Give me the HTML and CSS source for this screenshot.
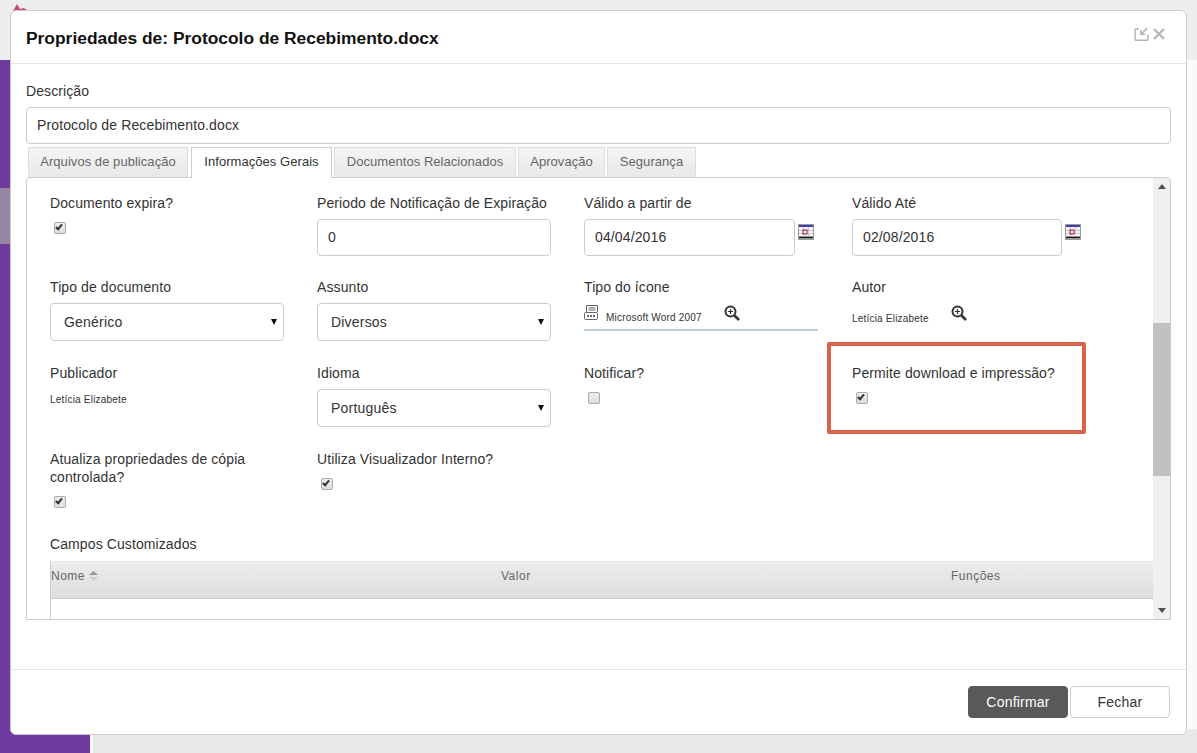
FILE: index.html
```html
<!DOCTYPE html>
<html lang="pt">
<head>
    <meta charset="UTF-8">
    <title>Propriedades de: Protocolo de Recebimento.docx</title>
    <link rel="stylesheet" href="styles.css">
</head>
<body>
    <div class="backdrop">
        <div class="topbar"></div>
        <div class="sidebar">
            <div class="sidebar-item"></div>
        </div>
        <div class="page-content"></div>
        <svg class="logo-tip" width="16" height="8" viewBox="0 0 16 8"><path d="M1 8 L5 1 L8 6 L12 5 L16 8 Z" fill="#c8487a"/></svg>
    </div>

    <div class="modal">
        <div class="modal-header">
            <h2>Propriedades de: Protocolo de Recebimento.docx</h2>
            <div class="modal-actions">
                <svg width="15" height="14" viewBox="0 0 15.3 14.6" fill="none" stroke="#b5b5b5" stroke-width="1.6">
                    <path d="M5 2 H1.5 Q1 2 1 2.5 V13 Q1 13.8 1.8 13.8 H13.5 Q14.3 13.8 14.3 13 V8"/>
                    <path d="M13.5 1.2 L7 7.5 M7 3.2 V7.5 H11.5"/>
                </svg>
                <svg width="12" height="12" viewBox="0 0 12 12" fill="none" stroke="#b5b5b5" stroke-width="2.2">
                    <path d="M1 1 L11 11 M11 1 L1 11"/>
                </svg>
            </div>
        </div>

        <div class="modal-body">
            <label class="desc-label">Descrição</label>
            <input class="text-input desc-input" type="text" value="Protocolo de Recebimento.docx">

            <div class="tabs">
                <div class="tab tab-first">Arquivos de publicação</div>
                <div class="tab tab-active">Informações Gerais</div>
                <div class="tab tab-docs">Documentos Relacionados</div>
                <div class="tab tab-aprov">Aprovação</div>
                <div class="tab tab-seg">Segurança</div>
            </div>

            <div class="panel">
                <div class="panel-content">
                    <div class="form-grid">
                        <div class="field row-a">
                            <label>Documento expira?</label>
                            <span class="check checked"></span>
                        </div>
                        <div class="field row-a">
                            <label>Periodo de Notificação de Expiração</label>
                            <input class="text-input" type="text" value="0">
                        </div>
                        <div class="field row-a">
                            <label>Válido a partir de</label>
                            <div class="date-wrap">
                                <input class="text-input date-input" type="text" value="04/04/2016">
                                <svg class="cal-icon" width="16" height="16" viewBox="0 0 16 16">
                                    <rect width="16" height="16" fill="#9a9a9a"/>
                                    <rect x="1" y="1" width="14" height="2" fill="#4040b0"/>
                                    <rect x="1" y="3" width="14" height="9" fill="#f4f4f4"/>
                                    <path d="M1 6.5 H15 M1 9.5 H15 M5.5 3 V12 M10.5 3 V12" stroke="#c8c8d8" stroke-width="1"/>
                                    <rect x="5" y="6" width="4" height="4" fill="none" stroke="#a01850" stroke-width="1"/>
                                    <rect x="1" y="13" width="14" height="1" fill="#111"/>
                                </svg>
                            </div>
                        </div>
                        <div class="field row-a">
                            <label>Válido Até</label>
                            <div class="date-wrap">
                                <input class="text-input date-input date-input-end" type="text" value="02/08/2016">
                                <svg class="cal-icon" width="16" height="16" viewBox="0 0 16 16">
                                    <rect width="16" height="16" fill="#9a9a9a"/>
                                    <rect x="1" y="1" width="14" height="2" fill="#4040b0"/>
                                    <rect x="1" y="3" width="14" height="9" fill="#f4f4f4"/>
                                    <path d="M1 6.5 H15 M1 9.5 H15 M5.5 3 V12 M10.5 3 V12" stroke="#c8c8d8" stroke-width="1"/>
                                    <rect x="5" y="6" width="4" height="4" fill="none" stroke="#a01850" stroke-width="1"/>
                                    <rect x="1" y="13" width="14" height="1" fill="#111"/>
                                </svg>
                            </div>
                        </div>

                        <div class="field row-b">
                            <label>Tipo de documento</label>
                            <div class="select">Genérico</div>
                        </div>
                        <div class="field row-b">
                            <label>Assunto</label>
                            <div class="select">Diversos</div>
                        </div>
                        <div class="field row-b">
                            <label>Tipo do ícone</label>
                            <div class="lookup lookup-line">
                                <svg class="doc-icon" width="16" height="17" viewBox="0 0 16 17" fill="none" stroke="#666" stroke-width="1">
                                    <path d="M2.5 8 V1.5 H13.5 V8 M4.5 4 H11.5 M4.5 6 H11.5"/>
                                    <rect x="0.5" y="8.5" width="13" height="7" rx="1"/>
                                    <path d="M3 12 H11" stroke-width="2" stroke-dasharray="2 1"/>
                                </svg>
                                <span class="small-text">Microsoft Word 2007</span>
                                <svg class="zoom-icon" width="16" height="16" viewBox="0 0 16 16" fill="none" stroke="#333">
                                    <circle cx="6.5" cy="6.5" r="5" stroke-width="2"/>
                                    <path d="M10.5 10.5 L15 15" stroke-width="2.6"/>
                                    <path d="M4 6.5 H9 M6.5 4 V9" stroke-width="1.2"/>
                                </svg>
                            </div>
                        </div>
                        <div class="field row-b">
                            <label>Autor</label>
                            <div class="lookup">
                                <span class="small-text">Letícia Elizabete</span>
                                <svg class="zoom-icon" width="16" height="16" viewBox="0 0 16 16" fill="none" stroke="#333">
                                    <circle cx="6.5" cy="6.5" r="5" stroke-width="2"/>
                                    <path d="M10.5 10.5 L15 15" stroke-width="2.6"/>
                                    <path d="M4 6.5 H9 M6.5 4 V9" stroke-width="1.2"/>
                                </svg>
                            </div>
                        </div>

                        <div class="field row-c">
                            <label>Publicador</label>
                            <span class="small-text publisher">Letícia Elizabete</span>
                        </div>
                        <div class="field row-c">
                            <label>Idioma</label>
                            <div class="select">Português</div>
                        </div>
                        <div class="field row-c">
                            <label>Notificar?</label>
                            <span class="check"></span>
                        </div>
                        <div class="field row-c highlighted">
                            <label>Permite download e impressão?</label>
                            <span class="check checked"></span>
                        </div>

                        <div class="field row-d">
                            <label>Atualiza propriedades de cópia controlada?</label>
                            <span class="check checked"></span>
                        </div>
                        <div class="field row-d">
                            <label>Utiliza Visualizador Interno?</label>
                            <span class="check checked"></span>
                        </div>
                    </div>

                    <div class="custom-fields">
                        <div class="custom-title">Campos Customizados</div>
                        <div class="custom-table">
                            <div class="custom-head">
                                <span>Nome <svg class="sort-icon" width="9" height="10" viewBox="0 0 9 10"><path d="M4.5 0 L9 4 H0 Z" fill="#999"/><path d="M0 6 H9 L4.5 10 Z" fill="#ccc"/></svg></span>
                                <span>Valor</span>
                                <span>Funções</span>
                            </div>
                        </div>
                    </div>
                </div>
                <div class="scrollbar">
                    <span class="arrow arrow-up"></span>
                    <div class="scroll-track"><div class="scroll-thumb"></div></div>
                    <span class="arrow arrow-down"></span>
                </div>
            </div>
        </div>

        <div class="modal-footer">
            <button class="btn btn-primary">Confirmar</button>
            <button class="btn">Fechar</button>
        </div>
    </div>
</body>
</html>
```

FILE: styles.css
```css
html, body {
    margin: 0;
    height: 100%;
    overflow: hidden;
}
body {
    font-family: "Liberation Sans", Arial, sans-serif;
    font-size: 14px;
    color: #333;
    background-color: #fafafa;
}
.backdrop {
    position: absolute;
    inset: 0;
}
.topbar {
    height: 60px;
    background-color: #eee;
}
.sidebar {
    position: absolute;
    left: 0;
    top: 60px;
    bottom: 0;
    width: 90px;
    background-color: #6f3b9e;
}
.sidebar-item {
    margin-top: 128px;
    height: 56px;
    background-color: #9586a3;
}
.page-content {
    position: absolute;
    left: 93px;
    top: 729px;
    right: 0;
    bottom: 0;
    background-color: #e8e8e8;
}
.logo-tip {
    position: absolute;
    left: 12px;
    top: 3px;
}
.modal {
    position: absolute;
    left: 10px;
    top: 10px;
    width: 1175px;
    height: 723px;
    display: flex;
    flex-direction: column;
    background: #fff;
    border: 1px solid #ccc;
    border-radius: 6px;
}
.modal-header {
    height: 50px;
    flex: none;
    display: flex;
    align-items: center;
    justify-content: space-between;
    padding: 2px 21px 0 15px;
    border-bottom: 1px solid #e5e5e5;
}
.modal-header h2 {
    margin: 0;
    font-size: 17.4px;
    font-weight: bold;
    color: #111;
}
.modal-actions {
    display: flex;
    align-items: center;
    gap: 4px;
    margin-top: -8px;
}
.modal-body {
    flex: 1;
    padding: 18px 15px 0;
}
.desc-label {
    display: block;
    height: 25px;
    letter-spacing: 0.1px;
    line-height: 19px;
}
.text-input {
    display: block;
    width: 100%;
    height: 37px;
    box-sizing: border-box;
    padding: 0 10px 2px;
    font-family: inherit;
    font-size: 14px;
    letter-spacing: 0.13px;
    color: #333;
    border: 1px solid #ccc;
    border-radius: 4px;
    background: #fff;
}
.desc-input {
    height: 37px;
}
.tabs {
    display: flex;
    gap: 2px;
    margin: 3px 0 0 2px;
    height: 30px;
}
.tab {
    box-sizing: border-box;
    border: 1px solid #ddd;
    border-bottom: none;
    text-align: center;
    font-size: 13px;
    letter-spacing: 0.05px;
    line-height: 27px;
    color: #666;
    background: linear-gradient(#f5f5f5, #e8e8e8);
}
.tab-first { width: 160px; }
.tab-active {
    width: 141px;
    margin-left: 1px;
    height: 31px;
    color: #333;
    background: #fff;
    border-color: #ccc;
    position: relative;
    z-index: 1;
}
.tab-docs { width: 182px; }
.tab-aprov { width: 87px; }
.tab-seg { width: 89px; }
.panel {
    position: relative;
    height: 443px;
    box-sizing: border-box;
    border: 1px solid #ccc;
    border-radius: 4px 4px 0 0;
    overflow: hidden;
}
.panel-content {
    padding: 16px 17px 0 23px;
}
.form-grid {
    display: grid;
    grid-template-columns: 267px 267px 268px 267px;
}
.field label {
    display: block;
    letter-spacing: 0.1px;
    line-height: 18px;
    margin-bottom: 7px;
}
.row-a { height: 84px; }
.row-b { height: 86px; }
.row-c { height: 86px; }
.row-d { height: 85px; padding-right: 20px; }
.field > .text-input,
.select {
    width: 234px;
}
.date-wrap {
    display: flex;
    align-items: flex-start;
    gap: 3px;
}
.date-input {
    width: 211px;
}
.date-input-end {
    width: 210px;
}
.cal-icon {
    margin-top: 5px;
}
.select {
    height: 38px;
    box-sizing: border-box;
    padding-left: 13px;
    border: 1px solid #ccc;
    border-radius: 4px;
    line-height: 37px;
    letter-spacing: 0.2px;
    position: relative;
}
.select::after {
    content: "";
    position: absolute;
    right: 6px;
    top: 15px;
    border-left: 3px solid transparent;
    border-right: 3px solid transparent;
    border-top: 6px solid #111;
}
.check {
    display: block;
    width: 10px;
    height: 10px;
    margin: 10px 0 0 4px;
    border: 1px solid #aaa;
    border-radius: 2px;
    background: linear-gradient(#eee, #ddd);
    position: relative;
}
.check.checked::after {
    content: "";
    position: absolute;
    left: 2px;
    top: 0;
    width: 4px;
    height: 7px;
    border-right: 2px solid #333;
    border-bottom: 2px solid #333;
    box-sizing: border-box;
    transform: rotate(40deg);
}
.small-text {
    font-size: 10px;
    letter-spacing: 0.2px;
    color: #333;
}
.publisher {
    display: block;
    margin-top: 12px;
}
.lookup {
    display: flex;
    align-items: center;
    height: 24px;
    margin-top: 10px;
    width: 234px;
    position: relative;
}
.lookup .zoom-icon {
    margin-left: 22px;
    margin-top: -10px;
}
.lookup-line {
    height: 23px;
    border-bottom: 2px solid #bccfdc;
}
.doc-icon {
    margin-right: 6px;
    margin-top: -10px;
}
.highlighted {
    position: relative;
}
.highlighted::before {
    content: "";
    position: absolute;
    left: -25px;
    top: -22px;
    width: 259px;
    height: 92px;
    box-sizing: border-box;
    border: 4px solid #d9634a;
    border-radius: 2px;
}
.custom-title {
    letter-spacing: 0.1px;
    line-height: 18px;
    margin: 0 0 8px;
}
.custom-table {
    margin-right: 0;
    border-left: 1px solid #ccc;
    height: 60px;
}
.custom-head {
    height: 37px;
    box-sizing: content-box;
    display: grid;
    grid-template-columns: 450px 450px 1fr;
    align-items: start;
    border-bottom: 1px solid #ccc;
    font-size: 12px;
    letter-spacing: 0.5px;
    line-height: 30px;
    color: #666;
    background: linear-gradient(#ececec, #dedede);
}
.sort-icon {
    vertical-align: -1px;
}
.scrollbar {
    position: absolute;
    right: 0;
    top: 0;
    bottom: 0;
    width: 17px;
    display: flex;
    flex-direction: column;
    background: #f0f0f0;
}
.scroll-track {
    flex: 1;
    padding-top: 128px;
}
.scroll-thumb {
    height: 153px;
    background: #c1c1c1;
}
.arrow {
    display: block;
    align-self: center;
    width: 0;
    height: 0;
    border-left: 4px solid transparent;
    border-right: 4px solid transparent;
    margin: 6px 0;
}
.arrow-up { border-bottom: 5px solid #505050; }
.arrow-down { border-top: 5px solid #505050; }
.modal-footer {
    height: 64px;
    flex: none;
    display: flex;
    align-items: center;
    justify-content: flex-end;
    gap: 2px;
    padding: 0 16px 0 0;
    border-top: 1px solid #e5e5e5;
}
.btn {
    width: 100px;
    height: 32px;
    font-family: inherit;
    font-size: 14px;
    letter-spacing: 0.2px;
    color: #333;
    background: #fff;
    border: 1px solid #ccc;
    border-radius: 4px;
}
.btn-primary {
    color: #fff;
    background: #58595b;
    border-color: #58595b;
}
```
